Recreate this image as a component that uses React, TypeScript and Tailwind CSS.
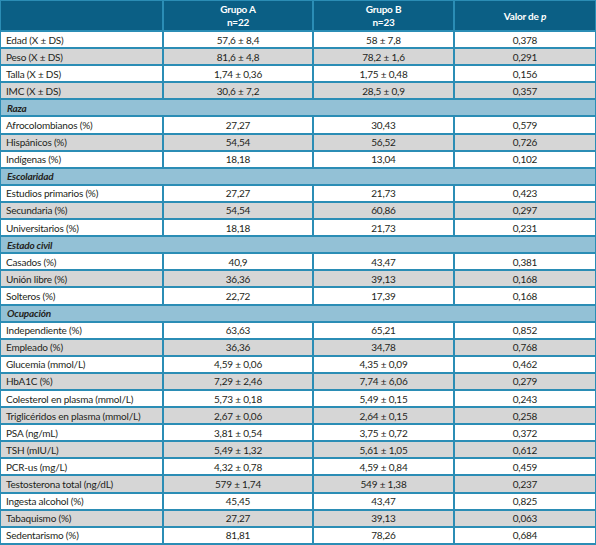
import React from "react";

type Row =
  | { kind: "section"; label: string }
  | { kind: "data"; label: string; a: string; b: string; p: string; gray: boolean };

const raw: (string | [string, string, string, string])[] = [
  ["Edad (X ± DS)", "57,6 ± 8,4", "58 ± 7,8", "0,378"],
  ["Peso (X ± DS)", "81,6 ± 4,8", "78,2 ± 1,6", "0,291"],
  ["Talla (X ± DS)", "1,74 ± 0,36", "1,75 ± 0,48", "0,156"],
  ["IMC (X ± DS)", "30,6 ± 7,2", "28,5 ± 0,9", "0,357"],
  "Raza",
  ["Afrocolombianos (%)", "27,27", "30,43", "0,579"],
  ["Hispánicos (%)", "54,54", "56,52", "0,726"],
  ["Indígenas (%)", "18,18", "13,04", "0,102"],
  "Escolaridad",
  ["Estudios primarios (%)", "27,27", "21,73", "0,423"],
  ["Secundaria (%)", "54,54", "60,86", "0,297"],
  ["Universitarios (%)", "18,18", "21,73", "0,231"],
  "Estado civil",
  ["Casados (%)", "40,9", "43,47", "0,381"],
  ["Unión libre (%)", "36,36", "39,13", "0,168"],
  ["Solteros (%)", "22,72", "17,39", "0,168"],
  "Ocupación",
  ["Independiente (%)", "63,63", "65,21", "0,852"],
  ["Empleado (%)", "36,36", "34,78", "0,768"],
  ["Glucemia (mmol/L)", "4,59 ± 0,06", "4,35 ± 0,09", "0,462"],
  ["HbA1C (%)", "7,29 ± 2,46", "7,74 ± 6,06", "0,279"],
  ["Colesterol en plasma (mmol/L)", "5,73 ± 0,18", "5,49 ± 0,15", "0,243"],
  ["Triglicéridos en plasma (mmol/L)", "2,67 ± 0,06", "2,64 ± 0,15", "0,258"],
  ["PSA (ng/mL)", "3,81 ± 0,54", "3,75 ± 0,72", "0,372"],
  ["TSH (mIU/L)", "5,49 ± 1,32", "5,61 ± 1,05", "0,612"],
  ["PCR-us (mg/L)", "4,32 ± 0,78", "4,59 ± 0,84", "0,459"],
  ["Testosterona total (ng/dL)", "579 ± 1,74", "549 ± 1,38", "0,237"],
  ["Ingesta alcohol (%)", "45,45", "43,47", "0,825"],
  ["Tabaquismo (%)", "27,27", "39,13", "0,063"],
  ["Sedentarismo (%)", "81,81", "78,26", "0,684"],
];

const rows: Row[] = (() => {
  const out: Row[] = [];
  let idx = 0;
  for (const r of raw) {
    if (typeof r === "string") {
      out.push({ kind: "section", label: r });
      idx = 0;
    } else {
      out.push({ kind: "data", label: r[0], a: r[1], b: r[2], p: r[3], gray: idx % 2 === 1 });
      idx++;
    }
  }
  return out;
})();

const grid = "grid grid-cols-[161px_148px_139px_140px] gap-x-[2px]";

export default function App() {
  return (
    <div
      className="w-[596px] h-[545px] overflow-hidden bg-[#2b8db5] pl-[1px] pr-[1px] pt-[1px] text-[10px] tracking-[-0.2px] text-[#231f20] leading-none"
      style={{ fontFamily: "Lato, 'Open Sans', sans-serif" }}
    >
      <div className="flex flex-col gap-y-[2px]">
        <div className={grid + " h-[29px]"}>
          <div className="bg-[#0b5f85]" />
          <div className="bg-[#0b5f85] text-white font-bold flex flex-col items-center justify-center gap-[3px]">
            <span>Grupo A</span>
            <span>n=22</span>
          </div>
          <div className="bg-[#0b5f85] text-white font-bold flex flex-col items-center justify-center gap-[3px]">
            <span>Grupo B</span>
            <span>n=23</span>
          </div>
          <div className="bg-[#0b5f85] text-white font-bold flex items-center justify-center">
            <span>
              Valor de <i>p</i>
            </span>
          </div>
        </div>
        {rows.map((r, i) =>
          r.kind === "section" ? (
            <div key={i} className="h-[15.1px] bg-[#93c1d6] flex items-center pl-[6px] font-bold italic">
              {r.label}
            </div>
          ) : (
            <div key={i} className={grid + " h-[15.1px]"}>
              <div className={(r.gray ? "bg-[#d6d6d6]" : "bg-white") + " flex items-center pl-[5px] whitespace-nowrap"}>
                {r.label}
              </div>
              <div className={(r.gray ? "bg-[#d6d6d6]" : "bg-white") + " flex items-center justify-center"}>{r.a}</div>
              <div className={(r.gray ? "bg-[#d6d6d6]" : "bg-white") + " flex items-center justify-center"}>{r.b}</div>
              <div className={(r.gray ? "bg-[#d6d6d6]" : "bg-white") + " flex items-center justify-center"}>{r.p}</div>
            </div>
          )
        )}
      </div>
    </div>
  );
}
